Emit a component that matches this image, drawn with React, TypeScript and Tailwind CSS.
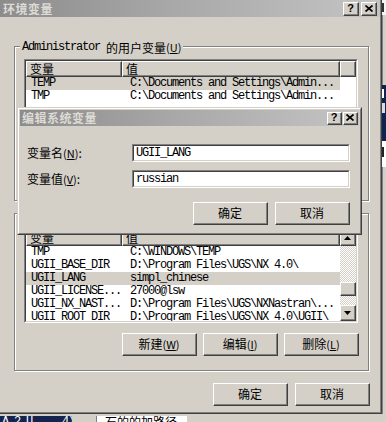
import React from "react";

const CJK = "font-['Noto_Sans_CJK_SC',sans-serif]";
const MONO = "font-['Liberation_Mono',monospace] text-[12px] tracking-[-1.2px]";

function Raised({
  className = "",
  innerClass = "",
  children,
}: {
  className?: string;
  innerClass?: string;
  children?: React.ReactNode;
}) {
  return (
    <div
      className={`bg-[#d4d0c8] border border-t-white border-l-white border-b-[#404040] border-r-[#404040] ${className}`}
    >
      <div
        className={`w-full h-full border-b border-r border-b-[#808080] border-r-[#808080] ${innerClass}`}
      >
        {children}
      </div>
    </div>
  );
}

function Sunken({
  className = "",
  innerClass = "",
  children,
}: {
  className?: string;
  innerClass?: string;
  children?: React.ReactNode;
}) {
  return (
    <div
      className={`border border-t-[#808080] border-l-[#808080] border-b-white border-r-white ${className}`}
    >
      <div
        className={`w-full h-full border border-t-[#404040] border-l-[#404040] border-b-[#d4d0c8] border-r-[#d4d0c8] bg-white overflow-hidden ${innerClass}`}
      >
        {children}
      </div>
    </div>
  );
}

function Btn({ children }: { children: React.ReactNode }) {
  return (
    <Raised
      className="w-[75px] h-[23px]"
      innerClass={`flex items-center justify-center text-[12px] text-black ${CJK}`}
    >
      {children}
    </Raised>
  );
}

function Mn({ c }: { c: string }) {
  return (
    <span className="text-[11px]">
      (<span className="underline underline-offset-1">{c}</span>)
    </span>
  );
}

function XGlyph() {
  return (
    <svg width="8" height="7" viewBox="0 0 8 7">
      <path d="M0.5 0.5 L7.5 6.5 M7.5 0.5 L0.5 6.5" stroke="#000" strokeWidth="1.7" />
    </svg>
  );
}

function CapButtons({ size }: { size: "lg" | "sm" }) {
  const cls = size === "lg" ? "w-[16px] h-[14px]" : "w-[15px] h-[13px]";
  return (
    <div className={`flex ${size === "lg" ? "gap-[2px]" : "gap-[1px]"}`}>
      <Raised className={cls} innerClass="flex items-center justify-center">
        <span className="font-['Liberation_Sans',sans-serif] font-bold text-[11px] leading-none text-black">?</span>
      </Raised>
      <Raised className={cls} innerClass="flex items-center justify-center">
        <XGlyph />
      </Raised>
    </div>
  );
}

function TitleBar({ title, size }: { title: string; size: "lg" | "sm" }) {
  return (
    <div
      className={`flex items-center justify-between bg-[linear-gradient(to_right,#8c8c8c,#a8a8a8_45%,#c4c4c4)] ${
        size === "lg" ? "h-[17px] pl-[3px] pr-[3px]" : "h-[16px] pl-[2px] pr-[1px]"
      }`}
    >
      <span className={`${CJK} font-bold text-[12px] tracking-[0.5px] text-[#dedbd5] leading-none`}>{title}</span>
      <CapButtons size={size} />
    </div>
  );
}

function HeaderCell({ w, children }: { w?: string; children?: React.ReactNode }) {
  return (
    <div
      className={`h-full bg-[#d4d0c8] border-t border-l border-t-white border-l-white border-b border-r border-b-[#404040] border-r-[#404040] ${w ?? "flex-1"}`}
    >
      <div className={`h-full border-b border-r border-b-[#808080] border-r-[#808080] pl-[3px] flex items-center text-[12px] ${CJK}`}>
        {children}
      </div>
    </div>
  );
}

type Row = { k: string; v: string; sel?: boolean };

function Rows({ rows }: { rows: Row[] }) {
  return (
    <div className="flex flex-col">
      {rows.map((r, i) => (
        <div
          key={i}
          className={`flex h-[13px] w-[314px] items-center text-black whitespace-nowrap ${MONO} leading-[13px] ${
            r.sel ? "bg-[#d4d0c8]" : ""
          }`}
        >
          <div className="w-[96px] pl-[5px] shrink-0">{r.k}</div>
          <div className="pl-[8px]">{r.v}</div>
        </div>
      ))}
    </div>
  );
}

function Header() {
  return (
    <div className="flex h-[16px] shrink-0">
      <HeaderCell w="w-[96px]">变量</HeaderCell>
      <HeaderCell w="w-[218px]">值</HeaderCell>
    </div>
  );
}

function Arrow({ up }: { up?: boolean }) {
  return (
    <svg width="7" height="4" viewBox="0 0 7 4">
      {up ? <path d="M3.5 0 L7 4 L0 4 Z" fill="#000" /> : <path d="M0 0 L7 0 L3.5 4 Z" fill="#000" />}
    </svg>
  );
}

function ScrollBar() {
  return (
    <div className="w-[16px] h-full flex flex-col">
      <Raised className="w-[16px] h-[16px] shrink-0" innerClass="flex items-center justify-center">
        <Arrow up />
      </Raised>
      <div className="flex-1 flex flex-col bg-[repeating-conic-gradient(#d4d0c8_0_25%,#ffffff_0_50%)] bg-[length:2px_2px]">
        <div className="h-[36px]" />
        <Raised className="w-[16px] h-[14px]" />
      </div>
      <Raised className="w-[16px] h-[16px] shrink-0" innerClass="flex items-center justify-center">
        <Arrow />
      </Raised>
    </div>
  );
}

function GroupButtons({ className = "" }: { className?: string }) {
  return (
    <div className={`flex justify-end gap-[6px] pr-[9px] ${className}`}>
      <Btn>
        新建<Mn c="W" />
      </Btn>
      <Btn>
        编辑<Mn c="I" />
      </Btn>
      <Btn>
        删除<Mn c="L" />
      </Btn>
    </div>
  );
}

function Group({
  label,
  className = "",
  children,
}: {
  label: React.ReactNode;
  className?: string;
  children: React.ReactNode;
}) {
  return (
    <div
      className={`relative w-[355px] border border-[#808080] shadow-[inset_1px_1px_0_#ffffff,1px_1px_0_#ffffff] ${className}`}
    >
      <div className="absolute -top-[7px] left-[5px] px-[2px] bg-[#d4d0c8] leading-[13px] text-[12px] text-black whitespace-nowrap flex items-center">
        {label}
      </div>
      {children}
    </div>
  );
}

function EditDialog() {
  return (
    <div className="absolute left-[17px] top-[107px] w-[345px] h-[128px] bg-[#d4d0c8] border border-t-[#d4d0c8] border-l-[#d4d0c8] border-b-[#404040] border-r-[#404040]">
      <div className="w-full h-full border border-t-white border-l-white border-b-[#808080] border-r-[#808080] p-[1px] flex flex-col">
        <TitleBar title="编辑系统变量" size="sm" />
        <div className="flex flex-col pl-[7px] pr-[9px] pt-[18px]">
          <div className="flex items-center h-[18px]">
            <div className={`w-[105px] text-[12px] text-black ${CJK}`}>
              变量名<Mn c="N" />:
            </div>
            <Sunken className="w-[218px] h-[18px]" innerClass="flex items-center pl-[2px]">
              <span className={`${MONO} text-black`}>UGII_LANG</span>
            </Sunken>
          </div>
          <div className="flex items-center h-[18px] mt-[8px]">
            <div className={`w-[105px] text-[12px] text-black ${CJK}`}>
              变量值<Mn c="V" />:
            </div>
            <Sunken className="w-[218px] h-[18px]" innerClass="flex items-center pl-[2px]">
              <span className={`${MONO} text-black`}>russian</span>
            </Sunken>
          </div>
          <div className="flex justify-end gap-[7px] mt-[14px]">
            <Btn>确定</Btn>
            <Btn>取消</Btn>
          </div>
        </div>
      </div>
    </div>
  );
}

function MainDialog() {
  const list1: Row[] = [
    { k: "TEMP", v: "C:\\Documents and Settings\\Admin...", sel: true },
    { k: "TMP", v: "C:\\Documents and Settings\\Admin..." },
  ];
  const list2: Row[] = [
    { k: "TMP", v: "C:\\WINDOWS\\TEMP" },
    { k: "UGII_BASE_DIR", v: "D:\\Program Files\\UGS\\NX 4.0\\" },
    { k: "UGII_LANG", v: "simpl_chinese", sel: true },
    { k: "UGII_LICENSE...", v: "27000@lsw" },
    { k: "UGII_NX_NAST...", v: "D:\\Program Files\\UGS\\NXNastran\\..." },
    { k: "UGII_ROOT_DIR", v: "D:\\Program Files\\UGS\\NX 4.0\\UGII\\" },
  ];
  return (
    <div className="relative w-[382px] h-[414px] shrink-0 bg-[#d4d0c8] border-r border-b border-r-[#404040] border-b-[#404040]">
      <div className="h-full border-r border-b border-r-[#808080] border-b-[#808080] flex flex-col">
        <TitleBar title="环境变量" size="lg" />
        <div className="pl-[14px] flex flex-col">
          <Group
            className="mt-[29px] h-[155px]"
            label={
              <>
                <span className={MONO}>Administrator&nbsp;</span>
                <span className={CJK}>的用户变量</span>
                <span className={CJK}>
                  <Mn c="U" />
                </span>
              </>
            }
          >
            <Sunken className="ml-[9px] mt-[12px] w-[334px] h-[95px]" innerClass="flex flex-col">
              <div className="flex h-[16px] shrink-0">
                <HeaderCell w="w-[96px]">变量</HeaderCell>
                <HeaderCell w="w-[218px]">值</HeaderCell>
                <HeaderCell />
              </div>
              <Rows rows={list1} />
            </Sunken>
            <GroupButtons className="mt-[10px]" />
          </Group>
          <Group
            className="mt-[12px] h-[158px]"
            label={
              <span className={CJK}>
                系统变量<Mn c="S" />
              </span>
            }
          >
            <Sunken className="ml-[9px] mt-[14px] w-[334px] h-[95px]" innerClass="flex">
              <div className="w-[314px] flex flex-col">
                <Header />
                <Rows rows={list2} />
              </div>
              <ScrollBar />
            </Sunken>
            <GroupButtons className="mt-[10px]" />
          </Group>
          <div className="flex justify-end gap-[7px] w-[356px] mt-[12px]">
            <Btn>确定</Btn>
            <Btn>取消</Btn>
          </div>
        </div>
      </div>
      <EditDialog />
    </div>
  );
}

function RightStrip() {
  return (
    <div className="w-[4px] h-[414px] shrink-0 flex flex-col overflow-hidden">
      <div className="h-[15px] bg-[#f4f4f4] flex items-start">
        <div className="w-[2px] h-[9px] mt-[3px] bg-[#333]" />
      </div>
      <div className="h-[70px] bg-[#d4d0c8] border-l border-l-[#808080]" />
      <div className="h-[56px] bg-[#0f2350] flex flex-col gap-[5px] pt-[4px]">
        <div className="w-[2px] h-[9px] bg-white" />
        <div className="w-[3px] h-[10px] bg-[#dcdcdc]" />
      </div>
      <div className="h-[26px] bg-white pt-[6px]">
        <div className="w-[2px] h-[10px] bg-[#222]" />
      </div>
      <div className="flex-1 bg-[#d4d0c8] border-l border-l-[#808080]" />
    </div>
  );
}

function BottomStrip() {
  return (
    <div className="h-[8px] flex flex-col">
      <div className="h-[2px] bg-[#d4d0c8]" />
      <div className="h-[6px] flex overflow-hidden">
        <div className={`w-[72px] bg-[#13254f] text-white text-[12px] leading-[12px] pl-[2px] overflow-hidden whitespace-nowrap ${MONO}`}>
          A 2 U &nbsp;&nbsp;&nbsp;&nbsp;4)
        </div>
        <div className="w-[25px] bg-[#d4d0c8] border-r border-r-[#808080]" />
        <div className={`w-[90px] bg-white text-black text-[12px] leading-[12px] pl-[8px] overflow-hidden whitespace-nowrap ${CJK}`}>
          石的的加路径
        </div>
        <div className="flex-1 bg-[#d4d0c8]" />
      </div>
    </div>
  );
}

export default function App() {
  return (
    <div className="w-[386px] h-[422px] overflow-hidden bg-[#d4d0c8] flex flex-col">
      <div className="flex h-[414px]">
        <MainDialog />
        <RightStrip />
      </div>
      <BottomStrip />
    </div>
  );
}
